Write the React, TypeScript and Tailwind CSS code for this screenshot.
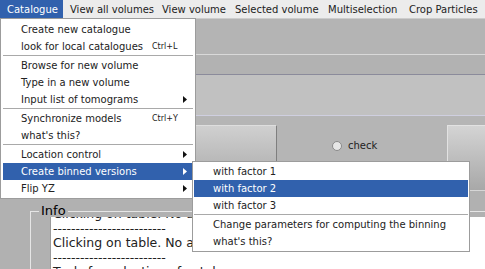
import React from "react";

type MenuEntry =
  | { kind: "sep" }
  | { kind: "item"; label: string; shortcut?: string; arrow?: boolean; active?: boolean };

const catalogueMenu: MenuEntry[] = [
  { kind: "item", label: "Create new catalogue" },
  { kind: "item", label: "look for local catalogues", shortcut: "Ctrl+L" },
  { kind: "sep" },
  { kind: "item", label: "Browse for new volume" },
  { kind: "item", label: "Type in a new volume" },
  { kind: "item", label: "Input list of tomograms", arrow: true },
  { kind: "sep" },
  { kind: "item", label: "Synchronize models", shortcut: "Ctrl+Y" },
  { kind: "item", label: "what's this?" },
  { kind: "sep" },
  { kind: "item", label: "Location control", arrow: true },
  { kind: "item", label: "Create binned versions", arrow: true, active: true },
  { kind: "item", label: "Flip YZ", arrow: true },
];

const binnedMenu: MenuEntry[] = [
  { kind: "item", label: "with factor 1" },
  { kind: "item", label: "with factor 2", active: true },
  { kind: "item", label: "with factor 3" },
  { kind: "sep" },
  { kind: "item", label: "Change parameters for computing the binning" },
  { kind: "item", label: "what's this?" },
];

const menuBar = [
  { label: "Catalogue", w: "w-[63px]", active: true },
  { label: "View all volumes", w: "w-[92px]" },
  { label: "View volume", w: "w-[73px]" },
  { label: "Selected volume", w: "w-[93px]" },
  { label: "Multiselection", w: "w-[81px]" },
  { label: "Crop Particles", w: "w-[83px]" },
];

const Arrow = ({ white }: { white?: boolean }) => (
  <svg width="5" height="7" viewBox="0 0 5 7" className="shrink-0">
    <path d="M0 0 L4 3.5 L0 7 Z" fill={white ? "#ffffff" : "#111111"} />
  </svg>
);

const DASHES = "-------------------------";

const App = () => {
  return (
    <div className="relative w-[485px] h-[269px] overflow-hidden bg-[#b3b3b3] font-['DejaVu_Sans',sans-serif] flex flex-col">
      {/* menu bar */}
      <div className="flex h-[18px] shrink-0 bg-[#ececec] text-[10px] text-[#222]">
        {menuBar.map((m) => (
          <div
            key={m.label}
            className={`${m.w} h-full flex items-center pl-[7px] whitespace-nowrap ${
              m.active ? "bg-[#3161ad] text-white" : ""
            }`}
          >
            {m.label}
          </div>
        ))}
      </div>

      {/* background panels */}
      <div className="h-px shrink-0 bg-[#cdcdcd]" />
      <div className="h-[35px] shrink-0 bg-[#b4b4b4]" />
      <div className="h-px shrink-0 bg-[#d9d9d9]" />
      <div className="h-[19px] shrink-0 bg-[#b2b2b2]" />
      <div className="h-px shrink-0 bg-[#8b8b9b]" />
      <div className="h-[40px] shrink-0 bg-[#c1c1c1]" />
      <div className="h-px shrink-0 bg-[#cfcfe0]" />

      {/* toolbar with buttons */}
      <div className="h-[74px] shrink-0 bg-[#b5b5b5] flex items-start pt-[9px]">
        <div className="ml-[97px] w-[180px] h-[65px] bg-gradient-to-b from-[#d0d0d0] to-[#a6a6a6] border-t border-l border-[#dedede] border-r-[#7f7f7f] border-r" />
        <div className="flex-1 flex items-center pt-[13px] pl-[55px] gap-[6px] text-[10px] text-[#222]">
          <span className="w-[10px] h-[10px] rounded-full border border-[#8a8a8a] bg-[#e6e6e6]" />
          <span>check</span>
        </div>
        <div className="w-[38px] h-[65px] bg-gradient-to-b from-[#d4d4d4] to-[#a8a8a8] border-t border-l border-[#e2e2e2]" />
      </div>
      <div className="h-px shrink-0 bg-[#d6d6d6]" />

      {/* Info panel */}
      <div className="flex-1 bg-[#b1b1b1] pt-[20px] pl-[30px]">
        <div className="border-t border-l border-[#e6e6e6] h-full flex flex-col">
          <div className="-mt-[9px] ml-[8px] self-start px-[2px] bg-[#b1b1b1] text-[13px] leading-[15px] text-black">
            Info
          </div>
          <div className="ml-[19px] -mt-[1px] flex-1 bg-white border-l border-[#9a9a9a] overflow-hidden">
            <div className="-mt-[10px] pl-[2px] text-[12.5px] leading-[14.5px] text-[#222] whitespace-nowrap">
              <div>Clicking on table. No action</div>
              <div>{DASHES}</div>
              <div>Clicking on table. No action</div>
              <div>{DASHES}</div>
              <div>Tools for selection of catalogues</div>
            </div>
          </div>
        </div>
      </div>

      {/* Catalogue dropdown */}
      <div className="absolute left-0 top-[18px] w-[196px] bg-white border border-[#9c9c9c] pt-[2px] pb-[1px] text-[10px]">
        {catalogueMenu.map((e, i) =>
          e.kind === "sep" ? (
            <div key={i} className="mx-[2px] h-[2px] border-t border-[#a9a9a9]" />
          ) : (
            <div
              key={i}
              className={`mx-[2px] h-[17px] flex items-center pl-[18px] pr-[5px] whitespace-nowrap ${
                e.active ? "bg-[#3161ad] text-white" : "text-[#222]"
              }`}
            >
              <span className="w-[131px]">{e.label}</span>
              {e.shortcut && <span className="text-[8px] text-[#222]">{e.shortcut}</span>}
              {e.arrow && (
                <span className="ml-auto">
                  <Arrow white={e.active} />
                </span>
              )}
            </div>
          )
        )}
      </div>

      {/* binned versions submenu */}
      <div className="absolute left-[192px] top-[161px] w-[278px] bg-white border border-[#9c9c9c] pt-px pb-px text-[10px]">
        {binnedMenu.map((e, i) =>
          e.kind === "sep" ? (
            <div key={i} className="mx-[1px] h-[2px] border-t border-[#a9a9a9]" />
          ) : (
            <div
              key={i}
              className={`mx-[1px] h-[17px] flex items-center pl-[19px] whitespace-nowrap ${
                e.active ? "bg-[#3161ad] text-white" : "text-[#222]"
              }`}
            >
              {e.label}
            </div>
          )
        )}
      </div>
    </div>
  );
};

export default App;
